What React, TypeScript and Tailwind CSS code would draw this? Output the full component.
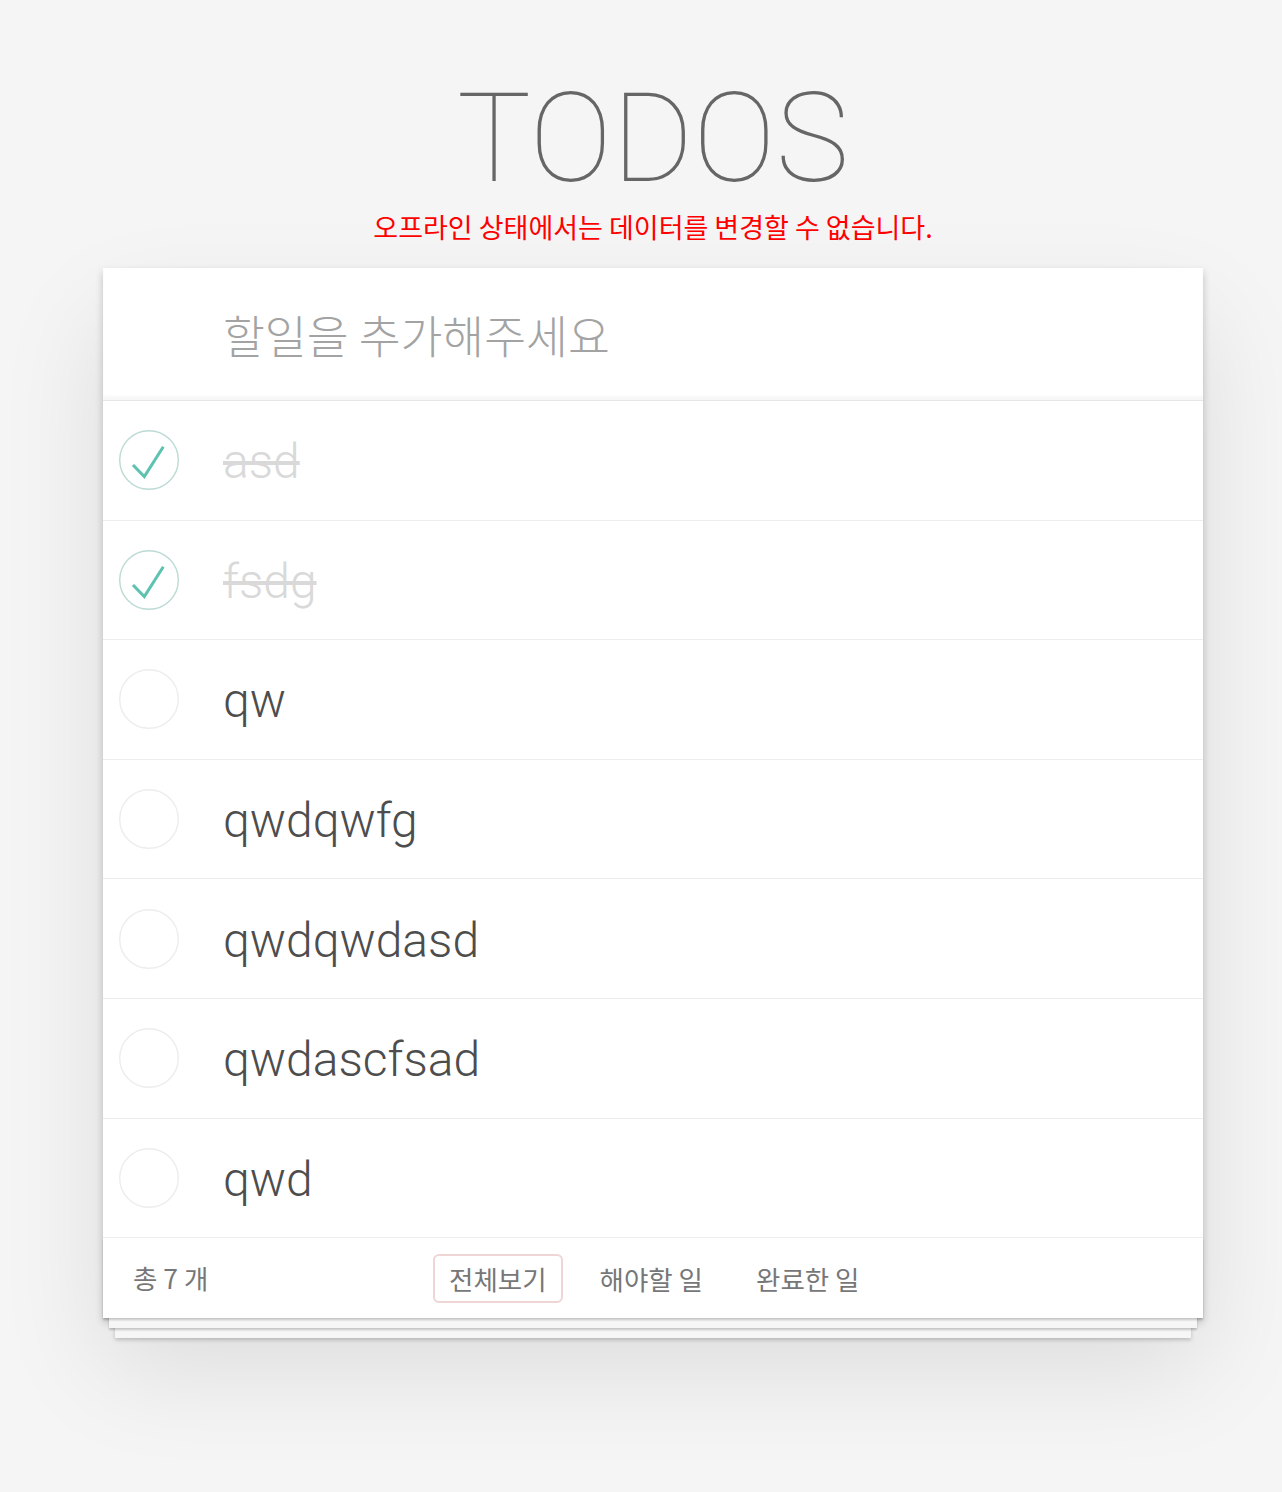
import { useState } from "react";

type Todo = { id: number; title: string; completed: boolean };

const initialTodos: Todo[] = [
  { id: 1, title: "asd", completed: true },
  { id: 2, title: "fsdg", completed: true },
  { id: 3, title: "qw", completed: false },
  { id: 4, title: "qwdqwfg", completed: false },
  { id: 5, title: "qwdqwdasd", completed: false },
  { id: 6, title: "qwdascfsad", completed: false },
  { id: 7, title: "qwd", completed: false },
];

const latin = "font-['Helvetica_Neue',Roboto,'Noto_Sans_CJK_KR',sans-serif]";
const korean = "font-['Noto_Sans_CJK_KR','Noto_Sans',sans-serif]";

function Toggle({ checked }: { checked: boolean }) {
  return (
    <svg width="60" height="60" viewBox="0 0 60 60" className="shrink-0">
      <circle
        cx="30"
        cy="30"
        r="29.3"
        fill="none"
        stroke={checked ? "#bddad5" : "#ededed"}
        strokeWidth="1.4"
      />
      {checked && (
        <polyline
          points="14,35 25.3,46.5 44.3,16.7"
          fill="none"
          stroke="#5dc2af"
          strokeWidth="3"
        />
      )}
    </svg>
  );
}

export default function App() {
  const [todos] = useState(initialTodos);
  const [filter, setFilter] = useState("all");

  return (
    <div className="min-h-screen bg-[#f5f5f5] pl-6 pt-[77px]">
      <div className="mx-auto w-[1100px]">
        {/* Title */}
        <h1
          className={`${latin} h-[124px] text-center text-[124px] leading-none font-thin text-[#666]`}
        >
          TODOS
        </h1>
        <p className={`${korean} mt-[10px] text-center text-[27px] leading-[32px] text-[#f00]`}>
          오프라인 상태에서는 데이터를 변경할 수 없습니다.
        </p>

        {/* Card */}
        <section className="mt-[25px] bg-white shadow-[0_4px_8px_0_rgba(0,0,0,0.2),0_50px_100px_0_rgba(0,0,0,0.1)]">
          <div className="h-[132px] shadow-[inset_0_-4px_2px_rgba(0,0,0,0.03)]">
            <input
              disabled
              placeholder="할일을 추가해주세요"
              className={`${korean} h-full w-full bg-transparent pl-[120px] pr-8 text-[45.5px] font-light outline-none placeholder:text-[#a3a3a3]`}
            />
          </div>

          <ul className="border-t border-[#e6e6e6]">
            {todos.map((t) => (
              <li
                key={t.id}
                className="flex h-[119.6px] items-center border-b border-[#ededed] pl-4"
              >
                <Toggle checked={t.completed} />
                <span
                  className={`${latin} ml-[44px] pt-1 text-[48px] font-light ${
                    t.completed ? "text-[#d9d9d9] line-through" : "text-[#4d4d4d]"
                  }`}
                >
                  {t.title}
                </span>
              </li>
            ))}
          </ul>

          {/* Footer */}
          <footer
            className={`${korean} flex h-[80px] items-center pl-[30px] text-[26.5px] text-[#777] shadow-[0_2px_2px_rgba(0,0,0,0.2),0_16px_0_-6px_#f6f6f6,0_18px_2px_-6px_rgba(0,0,0,0.2),0_32px_0_-12px_#f6f6f6,0_34px_4px_-12px_rgba(0,0,0,0.2)]`}
          >
            <span className="w-[300px] shrink-0">총 7 개</span>
            <div className="flex gap-[21px]">
              {[
                ["all", "전체보기"],
                ["active", "해야할 일"],
                ["completed", "완료한 일"],
              ].map(([key, label]) => (
                <button
                  key={key}
                  onClick={() => setFilter(key)}
                  className={`rounded-md border-2 px-[14px] py-[6px] leading-[33px] ${
                    filter === key ? "border-[#efd5d5]" : "border-transparent"
                  }`}
                >
                  {label}
                </button>
              ))}
            </div>
          </footer>
        </section>
      </div>
    </div>
  );
}
